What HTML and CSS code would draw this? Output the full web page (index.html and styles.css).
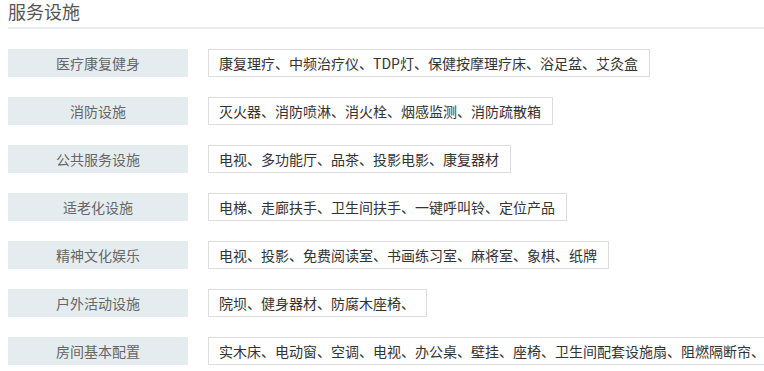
FILE: index.html
```html
<!DOCTYPE html>
<html lang="zh-CN">
<head>
<meta charset="utf-8">
<title>服务设施</title>
<link rel="stylesheet" href="styles.css">
</head>
<body>
<div class="page">
  <h2 class="title">服务设施</h2>
  <div class="list">
    <div class="row"><div class="label">医疗康复健身</div><div class="value">康复理疗、中频治疗仪、TDP灯、保健按摩理疗床、浴足盆、艾灸盒</div></div>
    <div class="row"><div class="label">消防设施</div><div class="value">灭火器、消防喷淋、消火栓、烟感监测、消防疏散箱</div></div>
    <div class="row"><div class="label">公共服务设施</div><div class="value">电视、多功能厅、品茶、投影电影、康复器材</div></div>
    <div class="row"><div class="label">适老化设施</div><div class="value">电梯、走廊扶手、卫生间扶手、一键呼叫铃、定位产品</div></div>
    <div class="row"><div class="label">精神文化娱乐</div><div class="value">电视、投影、免费阅读室、书画练习室、麻将室、象棋、纸牌</div></div>
    <div class="row"><div class="label">户外活动设施</div><div class="value">院坝、健身器材、防腐木座椅、</div></div>
    <div class="row"><div class="label">房间基本配置</div><div class="value">实木床、电动窗、空调、电视、办公桌、壁挂、座椅、卫生间配套设施扇、阻燃隔断帘、</div></div>
  </div>
</div>
</body>
</html>
```
FILE: styles.css
```css
html, body {
  margin: 0;
  padding: 0;
  background: #fff;
  overflow: hidden;
}
body {
  font-family: "Microsoft YaHei", "Noto Sans CJK SC", "Liberation Sans", sans-serif;
  color: #333;
}
.page {
  padding: 0 0 0 8px;
}
.title {
  margin: 0;
  font-size: 18px;
  font-weight: normal;
  line-height: 21px;
  color: #555;
  padding-top: 1px;
  padding-bottom: 5px;
  border-bottom: 2px solid #e8ecef;
}
.list {
  display: flex;
  flex-direction: column;
  gap: 20px;
  padding-top: 20px;
}
.row {
  display: flex;
  gap: 20px;
  height: 28px;
}
.label {
  flex: 0 0 180px;
  background: #e5ecef;
  color: #666;
  font-size: 14px;
  line-height: 28px;
  text-align: center;
}
.value {
  flex: 0 0 auto;
  border: 1px solid #ddd;
  padding: 0 11px 0 10px;
  font-size: 14px;
  line-height: 26px;
  color: #333;
  white-space: nowrap;
}
```
